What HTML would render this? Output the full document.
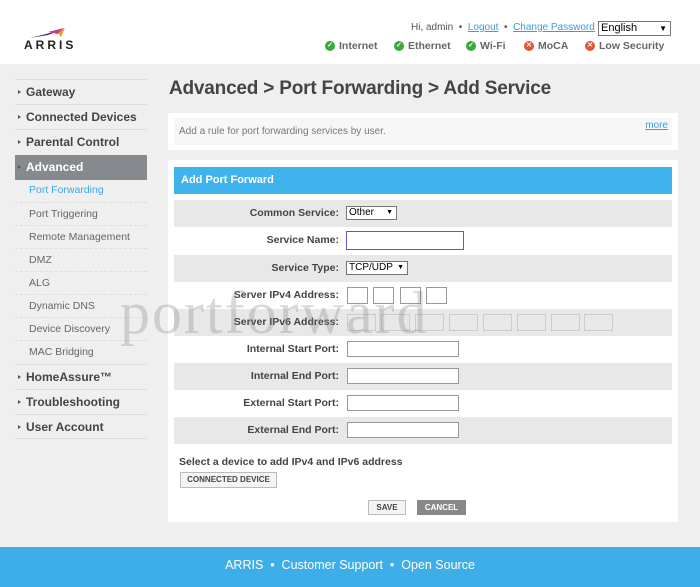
<!DOCTYPE html>
<html><head><style>
*{margin:0;padding:0;box-sizing:border-box}
body{width:700px;height:587px;background:#efefef;font-family:"Liberation Sans",Arial,sans-serif;position:relative;overflow:hidden}
.abs{position:absolute}
#hdr{left:0;top:0;width:700px;height:64px;background:#fff}
.nav{left:15px;width:132px;height:25px;border-top:1px solid #ddd;font-size:12px;font-weight:bold;color:#444;padding-left:11px;line-height:24px}
.nav:before{content:"";position:absolute;left:3px;top:10px;border-left:3px solid #555;border-top:2.5px solid transparent;border-bottom:2.5px solid transparent}
.sub{left:15px;width:132px;height:23px;border-top:1px dashed #ddd;font-size:10.5px;color:#666;padding-left:14px;line-height:22px}
.row{left:174px;width:498px;height:27px}
.g{background:#e8e8e8}
.lbl{position:absolute;right:333px;top:0;line-height:27px;font-size:10.5px;font-weight:bold;color:#444;white-space:nowrap}
.in{position:absolute;background:#fff;border:1px solid #999}
.btn{position:absolute;font-size:8px;font-weight:bold;text-align:center;line-height:14px}
.st{position:absolute;top:40px;height:12px;line-height:12px;font-size:10.5px;font-weight:bold;color:#666;white-space:nowrap;padding-left:14px}
.st i{position:absolute;left:0;top:1px;font-style:normal;width:10px;height:10px;border-radius:50%;color:#fff;font-size:7px;line-height:10px;text-align:center}
.ok{background:#3aa83a}.bad{background:#e2553a}
</style></head><body>
<div id="hdr" class="abs"></div>
<svg class="abs" style="left:28px;top:26px" width="60" height="14"><path d="M2 12 L34 4 L20 9 Z" fill="#3b2a7a"/><path d="M20 6 L36 2 L30 8 Z" fill="#c93b8a"/><path d="M30 7 L37 2 L33 11 Z" fill="#e8a11f"/></svg>
<div class="abs" style="left:24px;top:38px;font-size:12px;font-weight:bold;letter-spacing:3px;color:#222">ARRIS</div>
<div class="abs" style="left:411px;top:22px;font-size:10px;color:#555;white-space:nowrap">Hi, admin &nbsp;•&nbsp; <span style="color:#3b9bdc;text-decoration:underline">Logout</span> &nbsp;•&nbsp; <span style="color:#3b9bdc;text-decoration:underline">Change Password</span></div>
<div class="abs" style="left:598px;top:21px;width:73px;height:15px;border:1px solid #777;font-size:11px;line-height:13px;padding-left:2px;background:#fff">English<span style="position:absolute;right:3px;font-size:8px">▼</span></div>
<div class="st" style="left:325px"><i class="ok">✓</i>Internet</div>
<div class="st" style="left:394px"><i class="ok">✓</i>Ethernet</div>
<div class="st" style="left:466px"><i class="ok">✓</i>Wi-Fi</div>
<div class="st" style="left:524px"><i class="bad">✕</i>MoCA</div>
<div class="st" style="left:585px"><i class="bad">✕</i>Low Security</div>

<div class="abs nav" style="top:79px">Gateway</div>
<div class="abs nav" style="top:104px">Connected Devices</div>
<div class="abs nav" style="top:129px">Parental Control</div>
<div class="abs nav" style="top:155px;background:#868a8e;color:#fff;border:none">Advanced</div>
<div class="abs sub" style="top:179px;color:#3da8e6;border:none">Port Forwarding</div>
<div class="abs sub" style="top:202px">Port Triggering</div>
<div class="abs sub" style="top:225px">Remote Management</div>
<div class="abs sub" style="top:248px">DMZ</div>
<div class="abs sub" style="top:271px">ALG</div>
<div class="abs sub" style="top:294px">Dynamic DNS</div>
<div class="abs sub" style="top:317px">Device Discovery</div>
<div class="abs sub" style="top:340px">MAC Bridging</div>
<div class="abs nav" style="top:364px">HomeAssure™</div>
<div class="abs nav" style="top:389px">Troubleshooting</div>
<div class="abs nav" style="top:414px;border-bottom:1px solid #ddd">User Account</div>

<div class="abs" style="left:169px;top:78px;font-size:19px;font-weight:bold;color:#444;white-space:nowrap;letter-spacing:-0.2px">Advanced &gt; Port Forwarding &gt; Add Service</div>
<div class="abs" style="left:168px;top:113px;width:510px;height:37px;background:#fff"></div>
<div class="abs" style="left:174px;top:118px;width:498px;height:27px;background:#f7f7f7;font-size:10px;color:#777;line-height:27px;padding-left:5px">Add a rule for port forwarding services by user.<span style="position:absolute;right:4px;top:-6px;color:#3b9bdc;text-decoration:underline">more</span></div>
<div class="abs" style="left:168px;top:160px;width:510px;height:362px;background:#fff"></div>
<div class="abs" style="left:174px;top:167px;width:498px;height:27px;background:#41b3ec;color:#fff;font-size:11px;font-weight:bold;line-height:27px;padding-left:7px">Add Port Forward</div>

<div class="abs row g" style="top:200px"><span class="lbl">Common Service:</span><div class="in" style="left:172px;top:6px;width:51px;height:14px;font-size:10px;line-height:12px;padding-left:2px;border-color:#777">Other<span style="position:absolute;right:3px;font-size:7px">▼</span></div></div>
<div class="abs row" style="top:227px"><span class="lbl">Service Name:</span><div class="in" style="left:172px;top:4px;width:118px;height:19px;border:1.5px solid #6b4fc4"></div></div>
<div class="abs row g" style="top:255px"><span class="lbl">Service Type:</span><div class="in" style="left:172px;top:6px;width:62px;height:14px;font-size:10px;line-height:12px;padding-left:2px;border-color:#777">TCP/UDP<span style="position:absolute;right:3px;font-size:7px">▼</span></div></div>
<div class="abs row" style="top:282px"><span class="lbl">Server IPv4 Address:</span>
<div class="in" style="left:173px;top:5px;width:21px;height:17px"></div><div class="in" style="left:199px;top:5px;width:21px;height:17px"></div><div class="in" style="left:226px;top:5px;width:21px;height:17px"></div><div class="in" style="left:252px;top:5px;width:21px;height:17px"></div></div>
<div class="abs row g" style="top:309px"><span class="lbl">Server IPv6 Address:</span>
<div class="in" style="left:173px;top:5px;width:29px;height:17px;border-color:#ccc;background:#e8e8e8"></div><div class="in" style="left:207px;top:5px;width:29px;height:17px;border-color:#ccc;background:#e8e8e8"></div><div class="in" style="left:241px;top:5px;width:29px;height:17px;border-color:#ccc;background:#e8e8e8"></div><div class="in" style="left:275px;top:5px;width:29px;height:17px;border-color:#ccc;background:#e8e8e8"></div><div class="in" style="left:309px;top:5px;width:29px;height:17px;border-color:#ccc;background:#e8e8e8"></div><div class="in" style="left:343px;top:5px;width:29px;height:17px;border-color:#ccc;background:#e8e8e8"></div><div class="in" style="left:377px;top:5px;width:29px;height:17px;border-color:#ccc;background:#e8e8e8"></div><div class="in" style="left:410px;top:5px;width:29px;height:17px;border-color:#ccc;background:#e8e8e8"></div></div>
<div class="abs row" style="top:336px"><span class="lbl">Internal Start Port:</span><div class="in" style="left:173px;top:5px;width:112px;height:16px"></div></div>
<div class="abs row g" style="top:363px"><span class="lbl">Internal End Port:</span><div class="in" style="left:173px;top:5px;width:112px;height:16px"></div></div>
<div class="abs row" style="top:390px"><span class="lbl">External Start Port:</span><div class="in" style="left:173px;top:5px;width:112px;height:16px"></div></div>
<div class="abs row g" style="top:417px"><span class="lbl">External End Port:</span><div class="in" style="left:173px;top:5px;width:112px;height:16px"></div></div>

<div class="abs" style="left:179px;top:456px;font-size:10.5px;font-weight:bold;color:#444">Select a device to add IPv4 and IPv6 address</div>
<div class="btn" style="left:180px;top:472px;width:97px;height:16px;border:1px solid #bbb;background:#f4f4f4;color:#444">CONNECTED DEVICE</div>
<div class="btn" style="left:368px;top:500px;width:38px;height:15px;border:1px solid #bbb;background:#f4f4f4;color:#444">SAVE</div>
<div class="btn" style="left:417px;top:500px;width:49px;height:15px;background:#888;color:#fff;line-height:15px">CANCEL</div>

<div class="abs" style="left:120px;top:279px;font-family:'Liberation Serif',serif;font-size:60px;color:rgba(130,130,130,0.3);letter-spacing:2px;white-space:nowrap">portforward</div>

<div class="abs" style="left:0;top:547px;width:700px;height:40px;background:#3eaee9;color:#fff;font-size:12.5px;text-align:center;line-height:37px">ARRIS &nbsp;•&nbsp; Customer Support &nbsp;•&nbsp; Open Source</div>
</body></html>
